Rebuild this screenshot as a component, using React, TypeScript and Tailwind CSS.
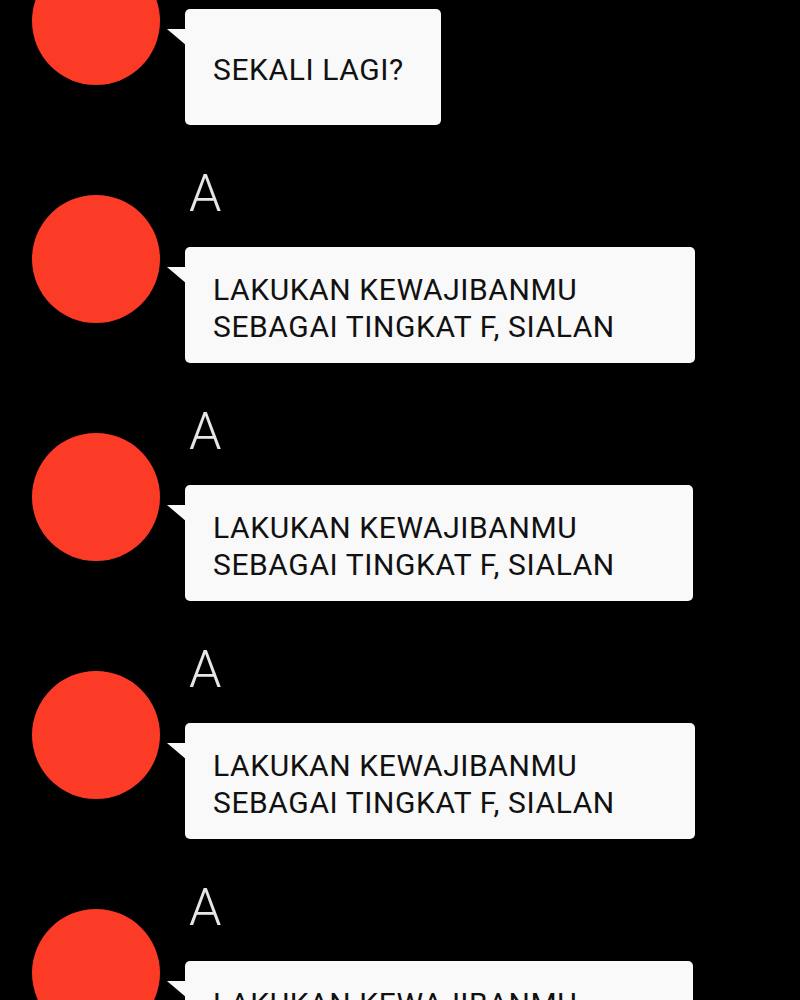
const messages = [
  { name: "", lines: ["SEKALI LAGI?"], width: "w-[256px]" },
  { name: "A", lines: ["LAKUKAN KEWAJIBANMU", "SEBAGAI TINGKAT F, SIALAN"], width: "w-[510px]" },
  { name: "A", lines: ["LAKUKAN KEWAJIBANMU", "SEBAGAI TINGKAT F, SIALAN"], width: "w-[508px]" },
  { name: "A", lines: ["LAKUKAN KEWAJIBANMU", "SEBAGAI TINGKAT F, SIALAN"], width: "w-[510px]" },
  { name: "A", lines: ["LAKUKAN KEWAJIBANMU", "SEBAGAI TINGKAT F, SIALAN"], width: "w-[508px]" },
];

function ChatItem({ name, lines, width }: { name: string; lines: string[]; width: string }) {
  return (
    <div className="flex">
      {/* avatar */}
      <div className="w-[185px] shrink-0 pl-[32px] pt-[27px]">
        <div className="w-[128px] h-[128px] rounded-full bg-[#fb3b26]" />
      </div>

      <div className="flex flex-col">
        <div className="h-[52px] pl-[4px] text-[52px] leading-none font-light text-[#e6e6e6] [font-family:Roboto,sans-serif]">
          {name}
        </div>

        {/* bubble */}
        <div className={`relative mt-[27px] h-[116px] ${width} rounded-[5px] bg-[#f9f9f9] flex items-center pl-[28px]`}>
          <svg className="absolute left-[-18px] top-[20px]" width="20" height="17" viewBox="0 0 20 17">
            <polygon points="0,0 20,0 20,17" fill="#f9f9f9" />
          </svg>
          <div className="text-[30px] leading-[37px] tracking-[0.6px] text-[#111] [font-family:Roboto,sans-serif] pt-[5px]">
            {lines.map((l, i) => (
              <div key={i}>{l}</div>
            ))}
          </div>
        </div>
      </div>
    </div>
  );
}

export default function App() {
  return (
    <div className="w-[800px] h-[1000px] overflow-hidden bg-black">
      <div className="flex flex-col gap-[43px] mt-[-70px]">
        {messages.map((m, i) => (
          <ChatItem key={i} {...m} />
        ))}
      </div>
    </div>
  );
}
